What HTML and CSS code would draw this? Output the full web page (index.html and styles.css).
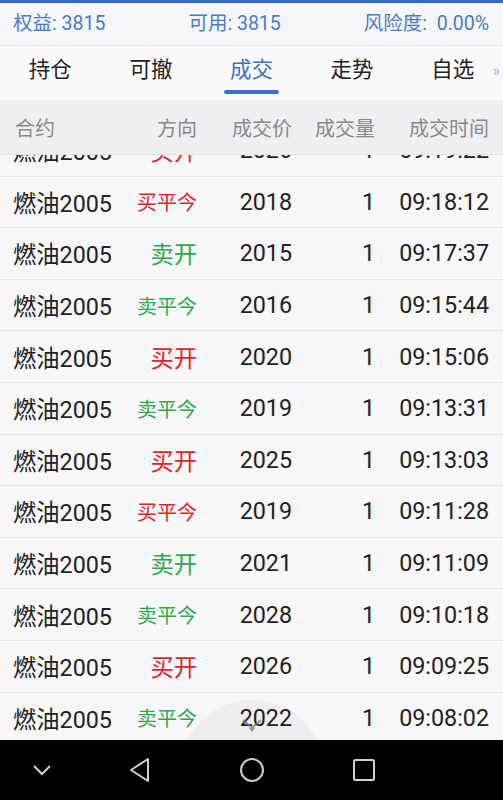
FILE: index.html
```html
<!DOCTYPE html>
<html lang="zh-CN">
<head>
    <meta charset="UTF-8">
    <meta name="viewport" content="width=device-width, initial-scale=1.0">
    <title>成交</title>
    <link rel="stylesheet" href="styles.css">
</head>
<body>
    <div class="app">
        <div class="top-line"></div>

        <div class="account">
            <span>权益: 3815</span>
            <span>可用: 3815</span>
            <span>风险度:&nbsp; 0.00%</span>
        </div>

        <div class="tabs">
            <div class="tab">持仓</div>
            <div class="tab">可撤</div>
            <div class="tab active">成交</div>
            <div class="tab">走势</div>
            <div class="tab">自选</div>
            <span class="more">»</span>
        </div>

        <div class="thead">
            <div class="c1">合约</div>
            <div>方向</div>
            <div>成交价</div>
            <div>成交量</div>
            <div>成交时间</div>
        </div>

        <div class="list">
            <div class="rows">
                <div class="row"><div class="c1">燃油2005</div><div class="buy">买开</div><div>2026</div><div>1</div><div>09:19:22</div></div>
                <div class="row"><div class="c1">燃油2005</div><div class="buy small">买平今</div><div>2018</div><div>1</div><div>09:18:12</div></div>
                <div class="row"><div class="c1">燃油2005</div><div class="sell">卖开</div><div>2015</div><div>1</div><div>09:17:37</div></div>
                <div class="row"><div class="c1">燃油2005</div><div class="sell small">卖平今</div><div>2016</div><div>1</div><div>09:15:44</div></div>
                <div class="row"><div class="c1">燃油2005</div><div class="buy">买开</div><div>2020</div><div>1</div><div>09:15:06</div></div>
                <div class="row"><div class="c1">燃油2005</div><div class="sell small">卖平今</div><div>2019</div><div>1</div><div>09:13:31</div></div>
                <div class="row"><div class="c1">燃油2005</div><div class="buy">买开</div><div>2025</div><div>1</div><div>09:13:03</div></div>
                <div class="row"><div class="c1">燃油2005</div><div class="buy small">买平今</div><div>2019</div><div>1</div><div>09:11:28</div></div>
                <div class="row"><div class="c1">燃油2005</div><div class="sell">卖开</div><div>2021</div><div>1</div><div>09:11:09</div></div>
                <div class="row"><div class="c1">燃油2005</div><div class="sell small">卖平今</div><div>2028</div><div>1</div><div>09:10:18</div></div>
                <div class="row"><div class="c1">燃油2005</div><div class="buy">买开</div><div>2026</div><div>1</div><div>09:09:25</div></div>
                <div class="row"><div class="c1">燃油2005</div><div class="sell small">卖平今</div><div>2022</div><div>1</div><div>09:08:02</div></div>
            </div>

            <!-- floating pull-down button -->
            <div class="float-btn">
                <svg width="22" height="16" viewBox="0 0 22 16">
                    <polyline points="2,3 11,11 20,3" fill="none" stroke="#7a7a7a" stroke-width="2"/>
                    <polygon points="8,11 14,11 11,15" fill="#7a7a7a"/>
                </svg>
            </div>
        </div>

        <div class="navbar">
            <svg width="20" height="12" viewBox="0 0 20 12">
                <polyline points="2,2 10,10 18,2" fill="none" stroke="#d0d0d0" stroke-width="2"/>
            </svg>
            <svg width="22" height="26" viewBox="0 0 22 26">
                <polygon points="19,2 19,24 2,13" fill="none" stroke="#d0d0d0" stroke-width="2" stroke-linejoin="round"/>
            </svg>
            <svg width="26" height="26" viewBox="0 0 26 26">
                <circle cx="13" cy="13" r="11" fill="none" stroke="#d0d0d0" stroke-width="2"/>
            </svg>
            <svg width="24" height="24" viewBox="0 0 24 24">
                <rect x="2" y="2" width="20" height="20" rx="1.5" fill="none" stroke="#d0d0d0" stroke-width="2"/>
            </svg>
        </div>
    </div>
</body>
</html>
```

FILE: styles.css
```css
body {
    margin: 0;
    font-family: Roboto, "Noto Sans CJK SC", sans-serif;
    background-color: #f7f7f9;
    color: #222;
}

.app {
    width: 503px;
    height: 800px;
    display: flex;
    flex-direction: column;
    overflow: hidden;
}

.top-line {
    height: 3px;
    background-color: #3167d0;
}

/* Account summary */
.account {
    height: 43px;
    box-sizing: border-box;
    display: flex;
    justify-content: space-between;
    align-items: center;
    padding: 0 14px 6px 13px;
    background-color: #f5f6f9;
    border-bottom: 1px solid #e4e5e8;
    color: #4b7bc6;
    font-size: 19.5px;
}

/* Tabs */
.tabs {
    position: relative;
    height: 54px;
    display: grid;
    grid-template-columns: repeat(5, 1fr);
    background-color: #fafafb;
}

.tab {
    position: relative;
    display: flex;
    justify-content: center;
    align-items: center;
    font-size: 21.5px;
    padding-bottom: 11px;
}

.tab.active {
    color: #3b6fca;
}

.tab.active::after {
    content: "";
    position: absolute;
    bottom: 6px;
    left: 50%;
    width: 55px;
    height: 4px;
    margin-left: -27px;
    border-radius: 2px;
    background-color: #3b6fca;
}

.more {
    position: absolute;
    right: 3px;
    top: 15px;
    font-size: 16px;
    color: #9ab7e8;
}

/* Table */
.thead, .row {
    display: grid;
    grid-template-columns: 107px 77px 95px 83px 114px;
    align-items: center;
    padding: 0 14px 0 13px;
    text-align: right;
}

.thead {
    height: 55px;
    box-sizing: border-box;
    background-color: #efeff1;
    border-bottom: 1px solid #e2e2e5;
    color: #8a8a8c;
    font-size: 20px;
}

.thead .c1 {
    padding-left: 2px;
}

.c1 {
    text-align: left;
}

.list {
    position: relative;
    flex: 1;
    overflow: hidden;
}

.rows {
    margin-top: -30px;
}

.row {
    height: 51.6px;
    box-sizing: border-box;
    border-bottom: 1px solid #e6e6e9;
    font-size: 23.3px;
}

.buy {
    color: #e3222a;
}

.sell {
    color: #2ea84b;
}

.small {
    font-size: 20px;
}

.float-btn {
    position: absolute;
    left: 179px;
    top: 545px;
    width: 146px;
    height: 146px;
    border-radius: 50%;
    background-color: rgba(0, 0, 0, 0.035);
    display: flex;
    justify-content: center;
    padding-top: 17px;
    box-sizing: border-box;
}

.float-btn svg {
    opacity: 0.8;
}

/* System nav bar */
.navbar {
    position: relative;
    height: 60px;
    flex-shrink: 0;
    background-color: #000;
    display: grid;
    grid-template-columns: 84px 112px 112px 112px;
    justify-items: center;
    align-items: center;
}
```
